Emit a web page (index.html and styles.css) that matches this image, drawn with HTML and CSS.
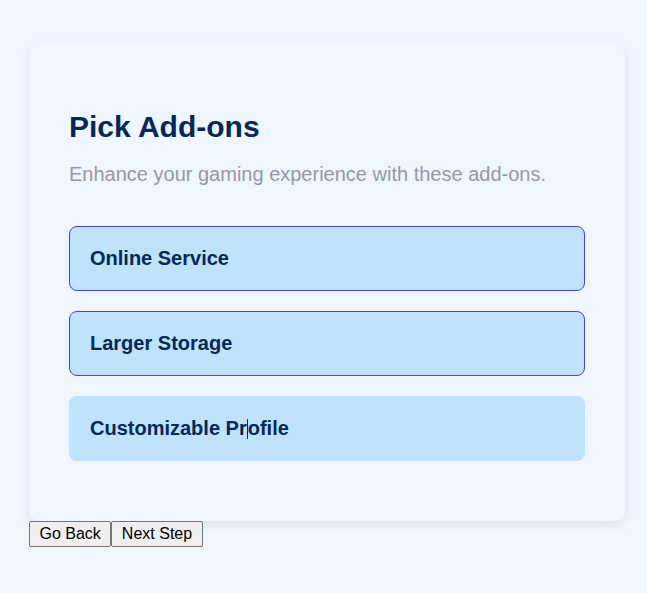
FILE: index.html
```html
<!DOCTYPE html>
<html>
<head>
<meta charset="utf-8">
<link rel="stylesheet" href="styles.css">
</head>
<body>
<div class="wrap">
  <div class="card">
    <h1 class="title">Pick Add-ons</h1>
    <p class="subtitle">Enhance your gaming experience with these add-ons.</p>
    <div class="options">
      <div class="option selected">Online Service</div>
      <div class="option selected">Larger Storage</div>
      <div class="option">Customizable Pr<span class="caret"></span>ofile</div>
    </div>
  </div>
  <div class="actions">
    <button class="btn">Go Back</button><button class="btn">Next Step</button>
  </div>
</div>
</body>
</html>
```
FILE: styles.css
```css
html, body {
  margin: 0;
  padding: 0;
  background: #eff6ff;
  font-family: "Liberation Sans", Arial, sans-serif;
}
.wrap {
  padding: 44px 0 0 29px;
  width: 596px;
}
.card {
  background: #f0f6ff;
  border-radius: 10px;
  box-shadow: 0 4px 12px rgba(0, 0, 0, 0.08);
  padding: 66px 40px 60px;
}
.title {
  margin: 0;
  font-size: 30px;
  font-weight: 700;
  color: #02295a;
}
.subtitle {
  margin: 19px 0 0;
  font-size: 20px;
  color: #9699ab;
}
.options {
  margin-top: 40px;
  display: flex;
  flex-direction: column;
  gap: 20px;
}
.option {
  height: 63px;
  display: flex;
  align-items: center;
  padding: 0 20px;
  border: 1px solid transparent;
  border-radius: 8px;
  background: #bfe2fd;
  color: #02295a;
  font-size: 20px;
  font-weight: 700;
}
.option.selected {
  border-color: #473dff;
}
.caret {
  display: inline-block;
  width: 1px;
  height: 20px;
  background: #02295a;
  vertical-align: -4px;
}
.actions {
  display: flex;
}
.btn {
  font-family: "Liberation Sans", Arial, sans-serif;
  font-size: 16px;
  padding: 3px 9.5px;
  margin: 0;
  border: 1px solid #767676;
  border-radius: 2px;
  background: #efefef;
  color: #000;
}
```
